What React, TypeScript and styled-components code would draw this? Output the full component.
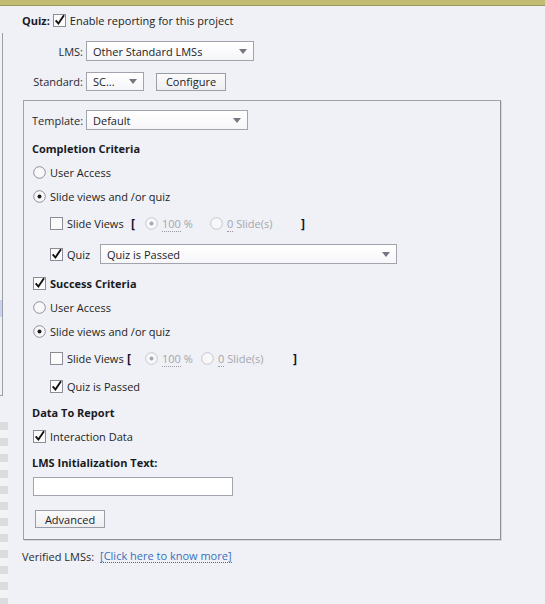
import React from "react";
import styled, {createGlobalStyle} from "styled-components";

const GlobalStyle = createGlobalStyle`
  html, body {
    margin: 0;
    padding: 0;
    background: #eff1f6;
  }
  body {
    font-family: "Open Sans", "Noto Sans", sans-serif;
    font-size: 11px;
    color: #1e1e22;
  }
`

const Screen = styled.div`
  width: 545px;
  height: 604px;
  display: flex;
  flex-direction: column;
  overflow: hidden;
`

const TopBar = styled.div`
  height: 5px;
  background: #c3bd74;
  border-bottom: 1px solid #9c985e;
  flex: none;
`

const Body = styled.div`
  flex: 1;
  display: flex;
`

const SideRail = styled.div`
  width: 8px;
  flex: none;
  display: flex;
  flex-direction: column;
`

const SidePanel = styled.div`
  margin-top: 27px;
  width: 2px;
  height: 362px;
  border-right: 1px solid #9d9da8;
  border-bottom: 1px solid #9d9da8;
  display: flex;
  flex-direction: column;
`

const SideHighlight = styled.div`
  margin-top: 267px;
  height: 17px;
  background: #c6d2ef;
`

const Checker = styled.div`
  margin-top: 26px;
  flex: 1;
  background: repeating-linear-gradient(to bottom, #dcdcdf 0 8px, #f3f3f5 8px 16px);
`

const Main = styled.div`
  flex: 1;
  padding: 7px 0 0 14px;
  display: flex;
  flex-direction: column;
`

const Row = styled.div<{ $h?: number; $mt?: number; $indent?: number }>`
  display: flex;
  align-items: center;
  height: ${p => p.$h ?? 24}px;
  margin-top: ${p => p.$mt ?? 0}px;
  padding-left: ${p => p.$indent ?? 0}px;
  white-space: nowrap;
`

const Bold = styled.span`
  font-weight: 700;
  color: #1a1a1e;
`

const FieldLabel = styled.span<{ $w: number }>`
  width: ${p => p.$w}px;
  text-align: right;
  padding-right: 3px;
  box-sizing: border-box;
  color: #2a2a30;
  flex: none;
`

const SelectBox = styled.div<{ $w: number; $h?: number }>`
  width: ${p => p.$w}px;
  height: ${p => p.$h ?? 20}px;
  box-sizing: border-box;
  border: 1px solid #a3a3ae;
  background: linear-gradient(to bottom, #ffffff, #f6f6f9);
  display: flex;
  align-items: center;
  padding: 0 6px;
  color: #222226;
  flex: none;
`

const SelectText = styled.span`
  flex: 1;
`

const Arrow = styled.span`
  width: 0;
  height: 0;
  border-left: 4px solid transparent;
  border-right: 4px solid transparent;
  border-top: 5px solid #767680;
`

const Button = styled.div<{ $w: number; $ml?: number }>`
  width: ${p => p.$w}px;
  height: 18px;
  margin-left: ${p => p.$ml ?? 0}px;
  box-sizing: border-box;
  border: 1px solid #9c9ca6;
  background: linear-gradient(to bottom, #fbfbfc, #eeeef1);
  display: flex;
  align-items: center;
  justify-content: center;
  color: #222226;
  flex: none;
`

const GroupBox = styled.div`
  margin-top: 9px;
  margin-left: 1px;
  width: 478px;
  box-sizing: border-box;
  border: 1px solid #a2a2ac;
  border-right-color: #8f8f9a;
  border-bottom-color: #8f8f9a;
  box-shadow: 1px 1px 0 #d6d7de;
  padding: 9px 0 11px 8px;
  display: flex;
  flex-direction: column;
`

const Option = styled.label<{ $disabled?: boolean }>`
  display: flex;
  align-items: center;
  gap: 4px;
  margin-left: 1px;
  color: ${p => p.$disabled ? "#a6a6ac" : "#1e1e22"};
`

const Cell = styled.span<{ $w: number }>`
  width: ${p => p.$w}px;
  flex: none;
  display: flex;
  align-items: center;
`

const BracketMark = styled.span`
  font-weight: 700;
  font-size: 12px;
  color: #141428;
`

const Dotted = styled.span`
  border-bottom: 1px dotted #9a9aa0;
  line-height: 12px;
`

const TextInput = styled.div`
  margin-left: 1px;
  width: 200px;
  height: 19px;
  box-sizing: border-box;
  border: 1px solid #a3a3ae;
  background: #ffffff;
`

const Footer = styled.div`
  margin-top: 8px;
  display: flex;
  align-items: center;
  height: 16px;
  gap: 6px;
  color: #2a2a30;
`

const Link = styled.a`
  color: #3a6fbd;
  text-decoration: none;
  border-bottom: 1px dotted #3a6fbd;
  line-height: 13px;
`

function Check({checked, disabled}: { checked?: boolean; disabled?: boolean }) {
    return <svg width="13" height="14" viewBox="0 0 13 14" style={{flex: "none"}}>
        <rect x="0.5" y="1.5" width="12" height="12" fill="#fbfbfc" stroke={disabled ? "#c4c4cc" : "#8c8c96"}/>
        {checked && <path d="M2.7 7.4 L5.4 10.5 L11 2.3" fill="none" stroke="#111" strokeWidth="1.9"/>}
    </svg>
}

function Radio({checked, disabled}: { checked?: boolean; disabled?: boolean }) {
    return <svg width="13" height="13" viewBox="0 0 13 13" style={{flex: "none"}}>
        <circle cx="6.5" cy="6.5" r="5.8" fill="#f8f8fa" stroke={disabled ? "#c6c6ce" : "#8e8e98"}/>
        {checked && <circle cx="6.5" cy="6.5" r="2" fill={disabled ? "#a8a8b0" : "#1c1c20"}/>}
    </svg>
}

function Select({w, h, value}: { w: number; h?: number; value: string }) {
    return <SelectBox $w={w} $h={h}>
        <SelectText>{value}</SelectText>
        <Arrow/>
    </SelectBox>
}

type Cols = { label: number; open: number; pct: number; slides: number }

function SlideViews({cols, mt}: { cols: Cols; mt: number }) {
    return <Row $mt={mt} $indent={17}>
        <Option>
            <Check/>
            <Cell $w={cols.label}>Slide Views</Cell>
        </Option>
        <Cell $w={cols.open}><BracketMark>[</BracketMark></Cell>
        <Cell $w={cols.pct}>
            <Option $disabled><Radio checked disabled/><span><Dotted>100</Dotted> %</span></Option>
        </Cell>
        <Cell $w={cols.slides}>
            <Option $disabled><Radio disabled/><span><Dotted>0</Dotted> Slide(s)</span></Option>
        </Cell>
        <BracketMark>]</BracketMark>
    </Row>
}

export default function App() {
    return <>
        <GlobalStyle/>
        <Screen>
            <TopBar/>
            <Body>
                <SideRail>
                    <SidePanel><SideHighlight/></SidePanel>
                    <Checker/>
                </SideRail>
                <Main>
                    <Row $h={14}>
                        <Bold>Quiz:</Bold>
                        <Option style={{marginLeft: 3}}><Check checked/>Enable reporting for this project</Option>
                    </Row>
                    <Row $h={20} $mt={14}>
                        <FieldLabel $w={64}>LMS:</FieldLabel>
                        <Select w={168} value="Other Standard LMSs"/>
                    </Row>
                    <Row $h={19} $mt={11}>
                        <FieldLabel $w={64}>Standard:</FieldLabel>
                        <Select w={58} h={19} value="SC..."/>
                        <Button $w={70} $ml={12}>Configure</Button>
                    </Row>
                    <GroupBox>
                        <Row $h={20}>
                            <FieldLabel $w={54} style={{textAlign: "left"}}>Template:</FieldLabel>
                            <Select w={162} value="Default"/>
                        </Row>
                        <Row $mt={6}><Bold>Completion Criteria</Bold></Row>
                        <Row><Option><Radio/>User Access</Option></Row>
                        <Row><Option><Radio checked/>Slide views and /or quiz</Option></Row>
                        <SlideViews mt={3} cols={{label: 64, open: 13, pct: 65, slides: 92}}/>
                        <Row $mt={7} $indent={17}>
                            <Option><Check checked/><Cell $w={33}>Quiz</Cell></Option>
                            <Select w={297} value="Quiz is Passed"/>
                        </Row>
                        <Row $mt={5}>
                            <Option><Check checked/><Bold>Success Criteria</Bold></Option>
                        </Row>
                        <Row><Option><Radio/>User Access</Option></Row>
                        <Row><Option><Radio checked/>Slide views and /or quiz</Option></Row>
                        <SlideViews mt={3} cols={{label: 60, open: 17, pct: 56, slides: 93}}/>
                        <Row $mt={4} $indent={17}>
                            <Option><Check checked/>Quiz is Passed</Option>
                        </Row>
                        <Row $mt={2}><Bold>Data To Report</Bold></Row>
                        <Row><Option><Check checked/>Interaction Data</Option></Row>
                        <Row $mt={2}><Bold>LMS Initialization Text:</Bold></Row>
                        <Row $h={19} $mt={3}><TextInput/></Row>
                        <Row $h={18} $mt={14}><Button $w={70} $ml={3}>Advanced</Button></Row>
                    </GroupBox>
                    <Footer>
                        <span>Verified LMSs:</span>
                        <Link href="#">[Click here to know more]</Link>
                    </Footer>
                </Main>
            </Body>
        </Screen>
    </>
}
